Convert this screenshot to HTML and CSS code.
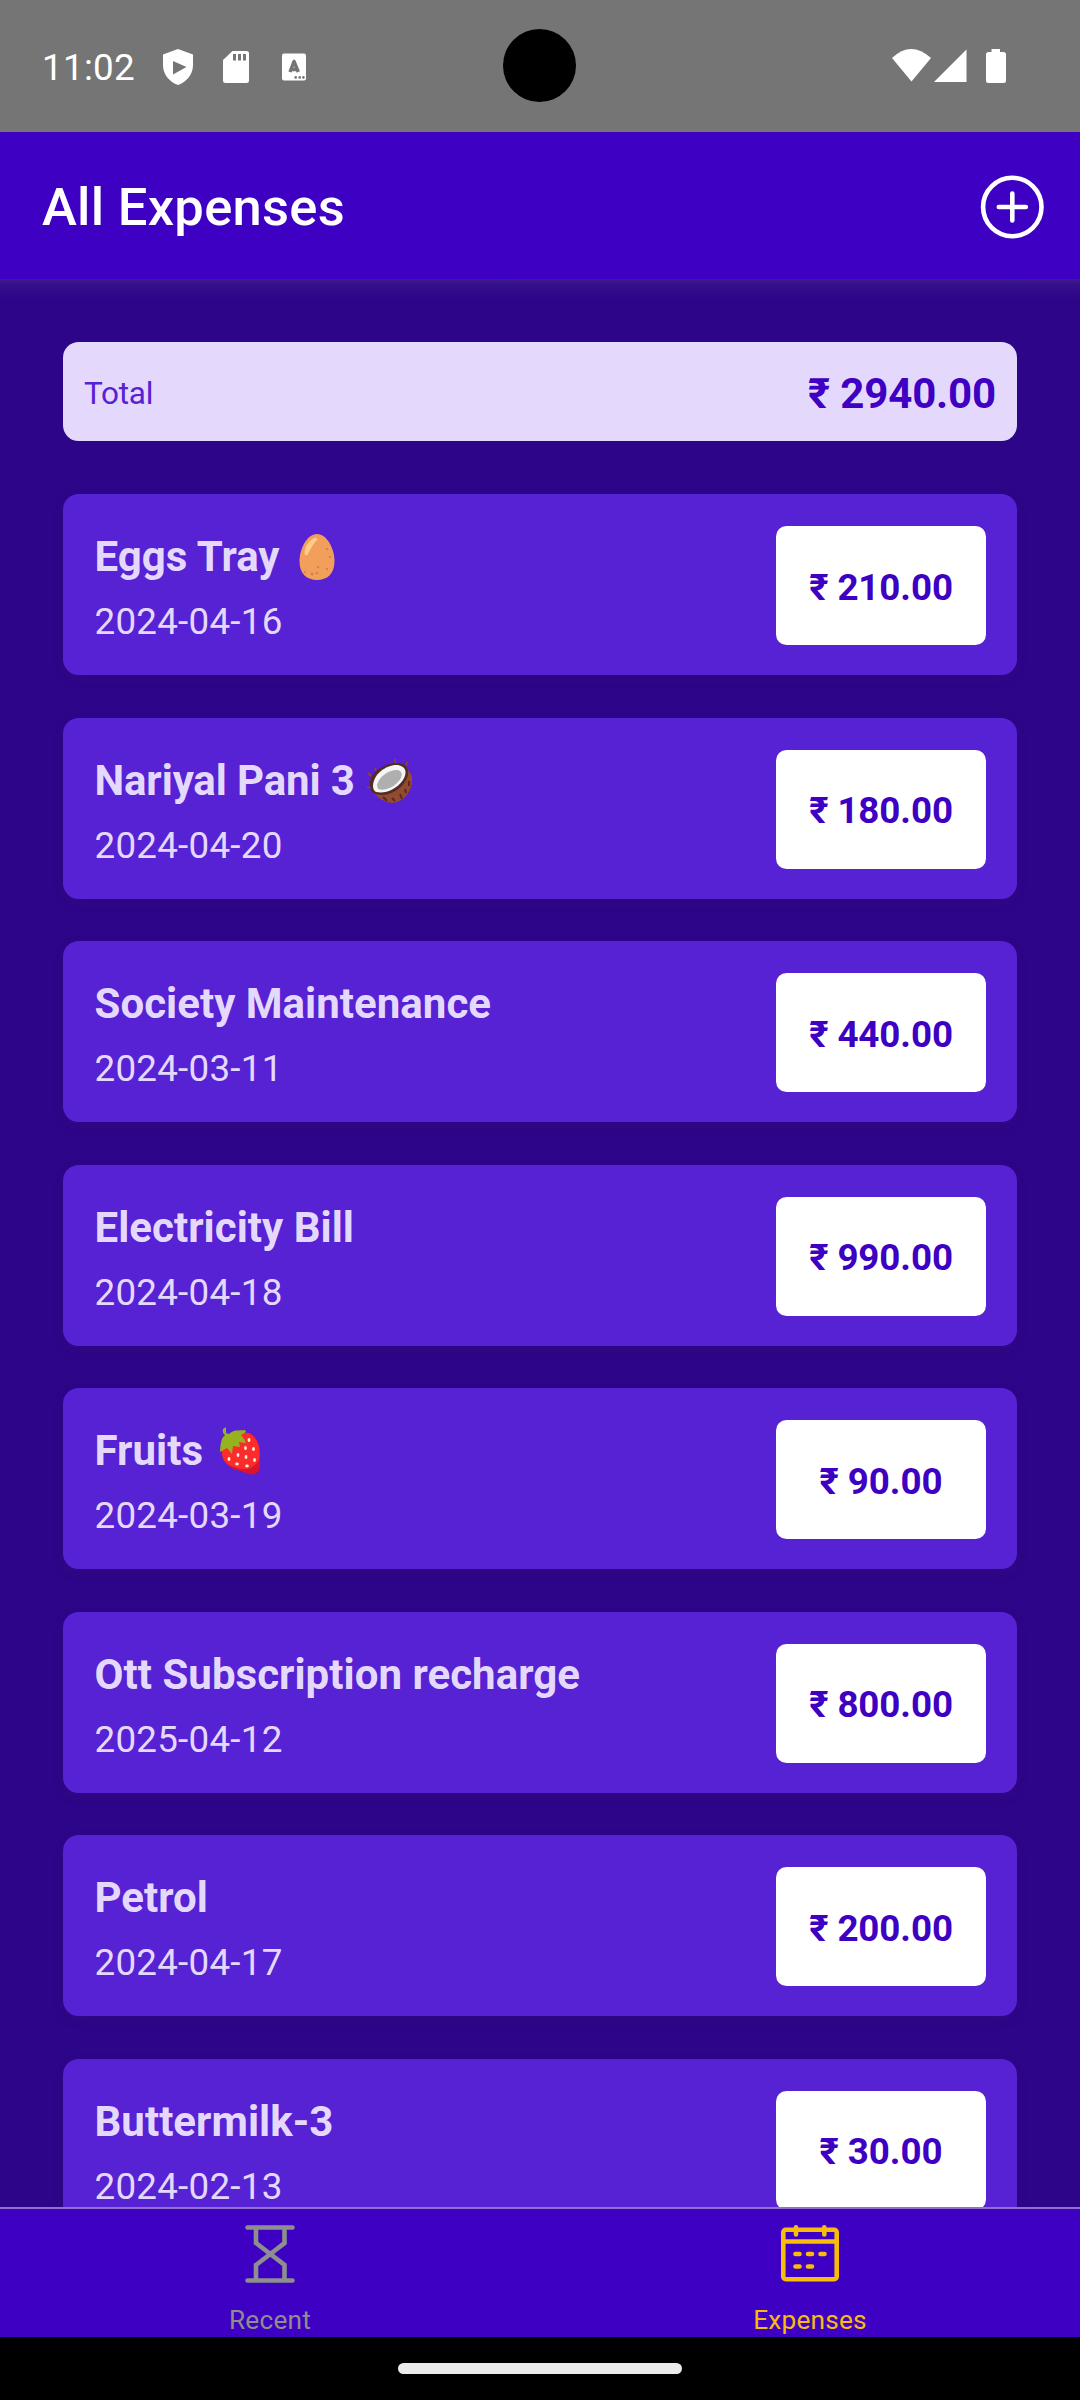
FILE: index.html
```html
<!DOCTYPE html>
<html lang="en">
<head>
<meta charset="utf-8">
<title>All Expenses</title>
<link rel="stylesheet" href="styles.css">
</head>
<body>
<div class="screen">
  <div class="status">
    <span class="time">11:02</span>
    <svg class="status-left" width="160" height="44" viewBox="0 0 160 44" fill="#fff">
      <path fill-rule="evenodd" d="M18 4 33 9.500V20C33 29.500 26.500 37 18 40 9.500 37 3 29.500 3 20V9.500ZM13 16V29.500L26.500 22Z"/>
      <path fill-rule="evenodd" d="M72.500 6H86.500Q89 6 89 8.500V35.500Q89 38 86.500 38H65.500Q63 38 63 35.500V15ZM73 9V15.500H76V9ZM78 9V15.500H81V9ZM83 9V15.500H86V9Z"/>
      <rect x="122" y="8.500" width="24" height="27" rx="2"/>
      <path d="M130 27 134 16.500 138.300 27M131.500 24.500H137" fill="none" stroke="#757575" stroke-width="3.500" stroke-linejoin="round"/>
      <g fill="#757575"><circle cx="135.700" cy="32.400" r="1.300"/><circle cx="139.700" cy="32.400" r="1.300"/><circle cx="143.400" cy="32.400" r="1.300"/></g>
    </svg>
    <span class="camera"></span>
    <svg class="status-right" width="120" height="44" viewBox="0 0 120 44" fill="#fff">
      <path d="M2 13Q21 -5 41 13L21.500 36.500Z"/>
      <path d="M44 37 76.500 4.500V37Z"/>
      <path d="M101.500 4H110V7H113.500Q116 7 116 9.500V35.500Q116 38 113.500 38H98.500Q96 38 96 35.500V9.500Q96 7 98.500 7H101.500Z"/>
    </svg>
  </div>
  <header class="header">
    <h1>All Expenses</h1>
    <svg width="64" height="64" viewBox="0 0 64 64" fill="none" stroke="#fff" stroke-width="4.600" stroke-linecap="round"><circle cx="32.300" cy="32" r="29.200"/><path d="M32.300 18.500V45.500M18.800 32H45.800"/></svg>
  </header>
  <main class="content">
    <section class="total"><span class="total-label">Total</span><strong class="total-sum">₹ 2940.00</strong></section>
    <ul class="list">
      <li class="card"><div><h2>Eggs Tray
        <svg class="emoji" viewBox="0 0 50 50"><path d="M25 2C35 2 42.500 17 42.500 29 42.500 42 35 48 25 48S7.500 42 7.500 29C7.500 17 15 2 25 2Z" fill="#f29f5c"/><path d="M22 6C16 9 11 18 13 23 17 25 17 16 25 8Q26 5 22 6Z" fill="#ffcc8a"/><g fill="#d97f52"><circle cx="35" cy="17" r="1.200"/><circle cx="38" cy="25" r="1.300"/><circle cx="26" cy="35" r="1.300"/><circle cx="35" cy="37" r="1.200"/><circle cx="20" cy="42" r="1.400"/><circle cx="25" cy="41" r="1.300"/><circle cx="13" cy="40" r="1"/></g></svg></h2><p>2024-04-16</p></div><span class="amount">₹ 210.00</span></li>
      <li class="card"><div><h2 class="tight">Nariyal Pani 3
        <svg class="emoji" viewBox="0 0 50 50"><path d="M30 8V3M41 10 42 6M6 20 3 17M6 32 2 31M11 15 10 12" stroke="#8a4630" stroke-width="1.800"/><path d="M7 34C12 42 20 47 28 47 40 45 48 35 47 20L42 12 7 28Z" fill="#924a31"/><path d="M5 30C3 17 20 6 34 7 44 8 45 17 41 24 34 37 18 42 8 37Q5 34 5 30Z" fill="#532b22"/><path d="M8 30C8 18 22 8 33 9 42 11 42 17 38 24 31 34 20 38 11 36Q8 34 8 30Z" fill="#f5f5f5"/><path d="M12 29C14 20 25 13 33 14 39 16 37 22 32 27 26 33 18 35 13 33Z" fill="#afafaf"/><path d="M18 41 22 45M27 42 30 45M35 38 37 43M40 33 41 37M44 25V30" stroke="#532b22" stroke-width="2"/></svg></h2><p>2024-04-20</p></div><span class="amount">₹ 180.00</span></li>
      <li class="card"><div><h2>Society Maintenance</h2><p>2024-03-11</p></div><span class="amount">₹ 440.00</span></li>
      <li class="card"><div><h2>Electricity Bill</h2><p>2024-04-18</p></div><span class="amount">₹ 990.00</span></li>
      <li class="card"><div><h2>Fruits
        <svg class="emoji" viewBox="0 0 50 50"><path d="M7 24C6 34 12 41 22 44L34 48C42 50 46 44 45 37 45 25 45 16 38 9 26 3 10 12 7 24Z" fill="#d9142b"/><path d="M7 24C6 34 12 40 22 42 31 45 38 43 44 34 46 24 44 13 34 7 24 5 10 12 7 24Z" fill="#fb2c2b"/><path d="M8 3 11 1V7L14 8C19 3 24 5 30 4L31 6 26 9Q30 14 31 17L24 16 25 21 18 20 17 28 12 22 5 26Q5 13 10 9Q7 7 8 3Z" fill="#96b31f"/><g fill="#fff2d8"><ellipse cx="34" cy="14" rx="1.400" ry="2"/><ellipse cx="30.500" cy="22" rx="1.400" ry="2"/><ellipse cx="38.500" cy="23" rx="1.400" ry="2"/><ellipse cx="23" cy="29" rx="1.400" ry="2"/><ellipse cx="31" cy="31" rx="1.400" ry="2"/><ellipse cx="39.500" cy="34" rx="1.400" ry="2"/><ellipse cx="14" cy="33" rx="1.400" ry="2"/><ellipse cx="22" cy="38" rx="1.800" ry="1.400"/><ellipse cx="32" cy="40" rx="1.800" ry="1.400"/></g></svg></h2><p>2024-03-19</p></div><span class="amount">₹ 90.00</span></li>
      <li class="card"><div><h2>Ott Subscription recharge</h2><p>2025-04-12</p></div><span class="amount">₹ 800.00</span></li>
      <li class="card"><div><h2>Petrol</h2><p>2024-04-17</p></div><span class="amount">₹ 200.00</span></li>
      <li class="card"><div><h2>Buttermilk-3</h2><p>2024-02-13</p></div><span class="amount">₹ 30.00</span></li>
    </ul>
  </main>
  <nav class="tabs">
    <a class="tab"><svg width="66" height="66" viewBox="0 0 66 66" fill="none" stroke="currentColor" stroke-width="4.600" stroke-linecap="round"><path d="M10.500 6.500H55.500M10.500 59.500H55.500M19 7V22L47.500 44V59M47.500 7V22L19 44V59"/></svg><span>Recent</span></a>
    <a class="tab active"><svg width="66" height="66" viewBox="0 0 66 66" fill="none" stroke="currentColor" stroke-width="4.600" stroke-linecap="round"><rect x="6.300" y="8.800" width="53.400" height="49.400" rx="2.500"/><path d="M7 20.500H59M19 6.300V13.500M47.300 6.300V13.500M18.500 33H22.500M31 33H35M43.500 33H47.500M18.500 45.500H22.500M31 45.500H35"/></svg><span>Expenses</span></a>
  </nav>
  <div class="gesture"><span></span></div>
</div>
</body>
</html>
```
FILE: styles.css
```css
* { box-sizing: border-box; margin: 0; padding: 0; }
body { font-family: Roboto, sans-serif; background: #000; }
.screen { width: 1080px; height: 2400px; display: flex; flex-direction: column; overflow: hidden; position: relative; }
.status { height: 132px; flex: none; background: #757575; display: flex; align-items: flex-start; padding: 45px 70px 0 42px; color: #fff; }
.time { font-size: 36.75px; line-height: 46px; width: 118px; letter-spacing: .3px; }
.status-left { flex: none; }
.status-right { margin-left: auto; }
.camera { position: absolute; left: 503px; top: 29px; width: 73px; height: 73px; border-radius: 50%; background: #000; }
.header { height: 147px; flex: none; background: #3e00c2; display: flex; align-items: center; justify-content: space-between; padding: 2px 36px 0 42px; color: #fff; }
h1 { font-size: 52.5px; font-weight: 500; line-height: 62px; letter-spacing: .28px; }
.content { flex: 1; min-height: 0; overflow: hidden; padding: 63px 63px 0; background: linear-gradient(#3f1a8f 0, #340f8b 6px, #2d0588 20px); }
.total { height: 99px; border-radius: 15.75px; background: #e4d9fd; display: flex; align-items: center; justify-content: space-between; padding: 3px 21px 0; }
.total-label { font-size: 31.5px; letter-spacing: -.25px; color: #5721d4; }
.total-sum { font-size: 42px; letter-spacing: -.15px; color: #3e00c2; }
.list { list-style: none; padding-top: 53px; display: flex; flex-direction: column; gap: 42.57px; }
.card { height: 181px; flex: none; border-radius: 15.75px; background: #5721d4; color: #e4d9fd; display: flex; justify-content: space-between; padding: 32px 31.5px 30px; box-shadow: 0 4px 10px rgba(57, 20, 110, .25); }
h2 { font-size: 42px; font-weight: 700; line-height: 56px; height: 56px; margin-top: 3px; display: flex; align-items: center; gap: 12px; white-space: nowrap; letter-spacing: .03px; }
.tight { letter-spacing: -.12px; gap: 10px; }
.card p { font-size: 36.75px; line-height: 43px; margin-top: 15px; letter-spacing: .25px; }
.emoji { width: 50px; height: 50px; flex: none; }
.amount { width: 210px; border-radius: 10.5px; background: #fff; color: #3e00c2; font-size: 36.75px; font-weight: 700; letter-spacing: -.1px; display: flex; align-items: center; justify-content: center; padding: 3px 0 0 1px; }
.tabs { height: 130px; flex: none; background: #3e00c2; border-top: 2px solid #9070d0; display: flex; }
.tab { flex: 1; display: flex; flex-direction: column; align-items: center; color: #8e8e8f; padding-top: 12px; }
.tab svg { flex: none; }
.tab span { font-size: 26.25px; line-height: 31px; margin-top: 18px; letter-spacing: .2px; }
.active { color: #f7bc0c; }
.gesture { height: 63px; flex: none; background: #000; display: flex; align-items: center; justify-content: center; }
.gesture span { width: 284px; height: 11px; border-radius: 6px; background: #ebebeb; }
```
